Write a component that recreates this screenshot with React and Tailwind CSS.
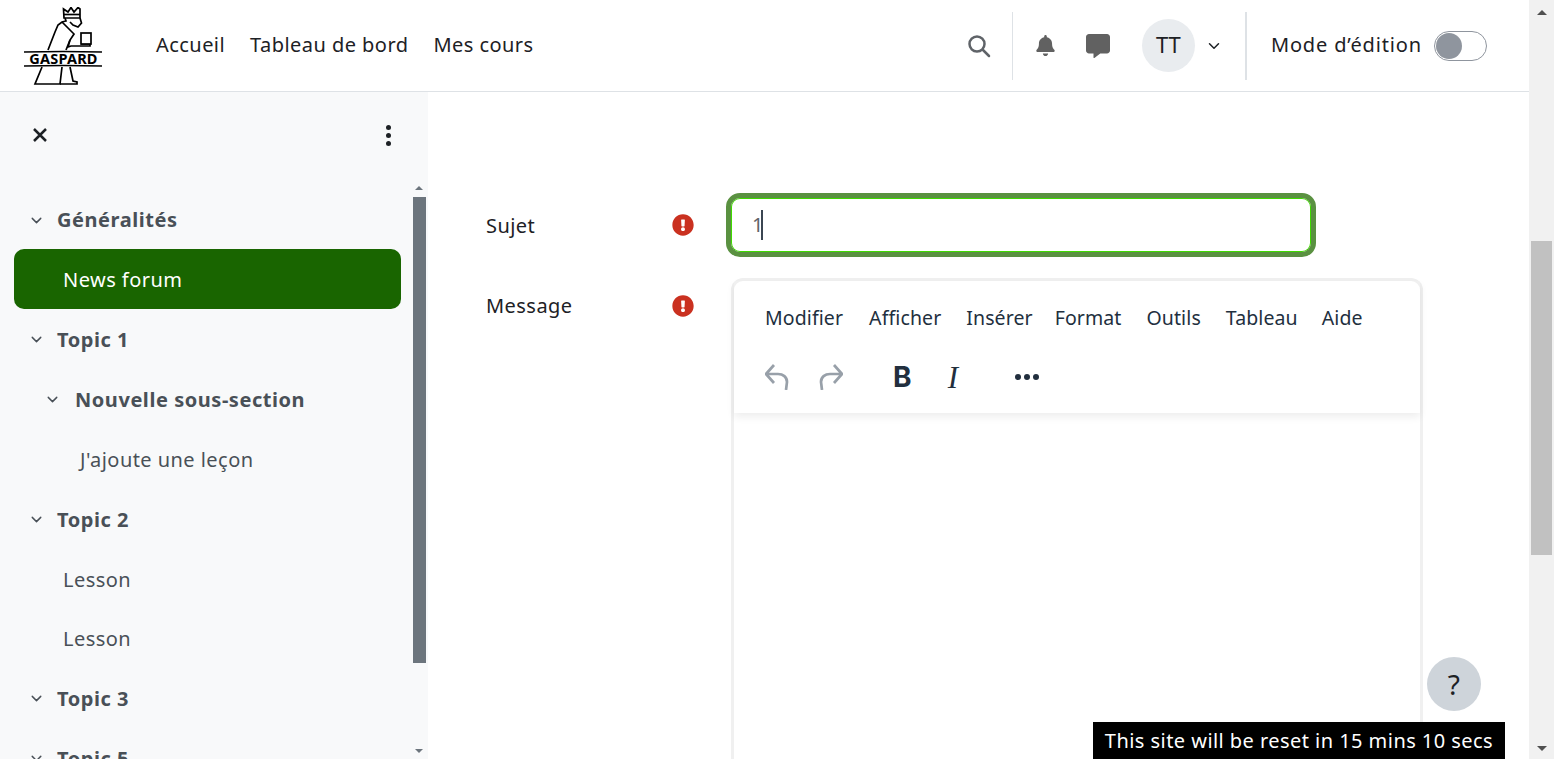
import { ChevronDown } from 'lucide-react';
import { FaBell, FaCommentAlt, FaExclamationCircle } from 'react-icons/fa';

const FONT = { fontFamily: '"Noto Sans", "Liberation Sans", sans-serif' };

function Logo() {
  return (
    <svg width="78" height="78" viewBox="24 6 78 78" fill="none" stroke="#000" strokeWidth="1.700" className="shrink-0">
      <path d="M64 17 L63.500 8 L68 11 L71 6.500 L74 11 L78 6.500 L80 8 L80 17 Z" fill="#fff" />
      <path d="M64 13.500 H80" />
      <path d="M65 17 L66 20 L62 21 L58 24 L55 31 L48 49" />
      <path d="M62 21 L68 27 L74 33 L70 39 L68 46 L71 45 H90 V43 H81" />
      <path d="M80 17 L81.500 22 L78 26 L73 24 L70 21" />
      <rect x="81" y="32" width="10" height="11" fill="#fff" />
      <path d="M70 39 L66 49" />
      <path d="M24 51 Q63 50 102 51" />
      <path d="M24 65 Q63 64 102 65" />
      <path d="M42 66 L35 83 H60 L62 66" />
      <path d="M70 66 L73 80 L77 81 V83 H60" />
      <text x="63.500" y="62.500" textAnchor="middle" fill="#000" stroke="none" fontSize="14.500" fontWeight="700" fontFamily='"Noto Sans", sans-serif' letterSpacing="0.2">GASPARD</text>
    </svg>
  );
}

function Header() {
  return (
    <header className="h-[92px] shrink-0 bg-white border-b border-[#dee2e6] flex items-center text-[20px] tracking-[0.45px] text-[#1d2125]">
      <div className="ml-[24px]"><Logo /></div>
      <nav className="ml-[54px] flex gap-[25px] pb-[2px]">
        <span>Accueil</span>
        <span>Tableau de bord</span>
        <span>Mes cours</span>
      </nav>
      <div className="ml-auto flex items-center">
        <svg width="24" height="24" viewBox="0 0 24 24" fill="none" stroke="#5f6368" strokeWidth="2.500" strokeLinecap="round">
          <circle cx="10" cy="10" r="7.500" />
          <path d="M16 16 L22 22" />
        </svg>
        <div className="ml-[21px] w-px h-[68px] bg-[#dee2e6]" />
        <FaBell className="ml-[22px] text-[#616161] text-[21px]" />
        <FaCommentAlt className="ml-[30px] text-[#616161] text-[24px]" />
        <div className="ml-[32px] w-[53px] h-[53px] rounded-full bg-[#e9ecef] flex items-center justify-center text-[22px] tracking-normal pb-[2px]">TT</div>
        <ChevronDown size={18} strokeWidth={2} className="ml-[10px]" />
        <div className="ml-[22px] w-[2px] h-[68px] bg-[#dee2e6]" />
        <span className="ml-[24px] tracking-[0.85px] pb-[2px]">Mode d’édition</span>
        <div className="ml-[12px] mr-[42px] w-[53px] h-[30px] rounded-full border border-[#8f959e] bg-white flex items-center pl-[1px]">
          <div className="w-[26px] h-[26px] rounded-full bg-[#8f959e]" />
        </div>
      </div>
    </header>
  );
}

function Section({ label, indent = false, height = 'h-[60px]' }) {
  return (
    <div className={`${height} pt-[1px] flex items-center font-bold tracking-[0.55px] text-[#495057] ${indent ? 'pl-[43px]' : 'pl-[27px]'}`}>
      <ChevronDown size={17} strokeWidth={2} className="shrink-0" />
      <span className={indent ? 'ml-[14px]' : 'ml-[12px]'}>{label}</span>
    </div>
  );
}

function Item({ label, pad = 'pl-[62px]', height = 'h-[60px]' }) {
  return <div className={`${height} pt-[1px] flex items-center text-[#495057] ${pad}`}>{label}</div>;
}

function Sidebar() {
  return (
    <aside className="w-[428px] shrink-0 bg-[#f8f9fa] flex flex-col overflow-hidden text-[20px] tracking-[0.45px]">
      <div className="h-[86px] shrink-0 flex items-center justify-between pl-[33px] pr-[37px]">
        <svg width="14" height="14" viewBox="0 0 14 14" stroke="#1d2125" strokeWidth="2.500"><path d="M1 1 L13 13 M13 1 L1 13" /></svg>
        <div className="flex flex-col gap-[3px]">
          <span className="w-[5px] h-[5px] rounded-full bg-[#1d2125]" />
          <span className="w-[5px] h-[5px] rounded-full bg-[#1d2125]" />
          <span className="w-[5px] h-[5px] rounded-full bg-[#1d2125]" />
        </div>
      </div>
      <div className="flex-1 flex min-h-0">
        <div className="flex-1 min-w-0 pl-[1px] pt-[12px]">
          <Section label="Généralités" height="h-[59px]" />
          <div className="ml-[13px] mr-[11px] h-[60px] pt-[1px] rounded-[10px] bg-[#196500] text-white flex items-center pl-[49px]">News forum</div>
          <Section label="Topic 1" />
          <Section label="Nouvelle sous-section" indent />
          <Item label="J'ajoute une leçon" pad="pl-[79px]" />
          <Section label="Topic 2" />
          <Item label="Lesson" />
          <Item label="Lesson" height="h-[59px]" />
          <Section label="Topic 3" />
          <Section label="Topic 5" />
        </div>
        <div className="w-[14px] mr-[2px] flex flex-col items-center pt-[8px] pb-[6px]">
          <div className="w-0 h-0 border-x-[4px] border-x-transparent border-b-[4px] border-b-[#6c757d]" />
          <div className="mt-[7px] w-[13px] h-[466px] bg-[#6c757d]" />
          <div className="mt-auto w-0 h-0 border-x-[4px] border-x-transparent border-t-[4px] border-t-[#6c757d]" />
        </div>
      </div>
    </aside>
  );
}

function Editor() {
  return (
    <div className="w-[692px] h-[600px] border-[3px] border-b-0 border-[#f0f0f0] rounded-t-[12px]">
      <div className="h-[132px] shadow-[0_4px_8px_rgba(0,0,0,0.07)] text-[#222f3e] text-[19.5px] tracking-[0.1px]">
        <div className="h-[73px] flex items-center pl-[31px] gap-[25px]">
          <span>Modifier</span>
          <span className="ml-[1px]">Afficher</span>
          <span className="-mr-[3px]">Insérer</span>
          <span>Format</span>
          <span>Outils</span>
          <span className="-mr-[1px]">Tableau</span>
          <span>Aide</span>
        </div>
        <div className="flex items-center pl-[31px] h-[46px]">
          <svg width="24" height="26" viewBox="0 0 24 26" fill="none" stroke="#98a0a9" strokeWidth="2.700">
            <path d="M9 1 L1 10 L9 19 M1 10 H13 C18 10 22 13 22 18 L21 26" />
          </svg>
          <svg width="24" height="26" viewBox="0 0 24 26" fill="none" stroke="#98a0a9" strokeWidth="2.700" className="ml-[30px]">
            <path d="M15 1 L23 10 L15 19 M23 10 H11 C6 10 2 13 2 18 L3 26" />
          </svg>
          <span className="ml-[50px] text-[28px] font-bold leading-none" style={{ fontFamily: '"Inter", sans-serif' }}>B</span>
          <span className="ml-[36px] text-[31px] italic leading-none" style={{ fontFamily: '"Liberation Serif", serif' }}>I</span>
          <div className="ml-[57px] flex gap-[3px]">
            <span className="w-[6px] h-[6px] rounded-full bg-[#222f3e]" />
            <span className="w-[6px] h-[6px] rounded-full bg-[#222f3e]" />
            <span className="w-[6px] h-[6px] rounded-full bg-[#222f3e]" />
          </div>
        </div>
      </div>
    </div>
  );
}

function Main() {
  return (
    <main className="flex-1 min-w-0 relative overflow-hidden bg-white text-[20px] tracking-[0.45px] text-[#1d2125]">
      <div className="pl-[58px] pt-[101px]">
        <div className="flex items-center h-[64px]">
          <span className="w-[186px] pt-[2px]">Sujet</span>
          <FaExclamationCircle className="text-[#ca3120] text-[22px]" />
          <div className="ml-[32px] w-[590px] h-[64px] rounded-[14px] bg-white border-[5px] border-[#5a9141] flex items-center pl-[21px] shadow-[inset_0_0_0_1px_#3fdb00]">
            <span className="text-[#5f6368] tracking-[-2.500px]">1</span>
            <span className="w-[2px] h-[30px] bg-[#3b4652]" />
          </div>
        </div>
        <div className="flex items-start mt-[21px]">
          <span className="w-[186px] leading-[56px]">Message</span>
          <FaExclamationCircle className="text-[#ca3120] text-[22px] mt-[17px]" />
          <div className="ml-[37px]"><Editor /></div>
        </div>
      </div>
      <button className="absolute left-[999px] top-[565px] w-[54px] h-[54px] rounded-full bg-[#ced4da] flex items-center justify-center text-[28px]">?</button>
      <div className="absolute left-[665px] top-[630px] w-[412px] h-[37px] bg-black text-white flex items-center justify-center whitespace-nowrap">This site will be reset in 15 mins 10 secs</div>
    </main>
  );
}

function PageScrollbar() {
  return (
    <div className="w-[25px] h-full shrink-0 bg-[#f1f1f1] flex flex-col items-center pt-[10px] pb-[8px]">
      <div className="w-0 h-0 border-x-[5px] border-x-transparent border-b-[5px] border-b-[#505050]" />
      <div className="mt-[226px] w-[21px] h-[314px] bg-[#c1c1c1]" />
      <div className="mt-auto w-0 h-0 border-x-[5px] border-x-transparent border-t-[5px] border-t-[#505050]" />
    </div>
  );
}

export default function App() {
  return (
    <div className="h-[759px] w-[1554px] flex overflow-hidden" style={FONT}>
      <div className="flex-1 min-w-0 flex flex-col">
        <Header />
        <div className="flex-1 flex min-h-0">
          <Sidebar />
          <Main />
        </div>
      </div>
      <PageScrollbar />
    </div>
  );
}
